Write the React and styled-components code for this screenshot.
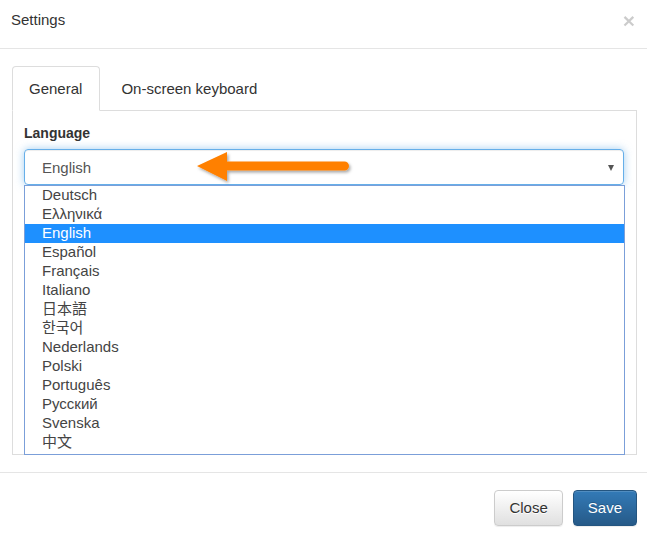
import React from "react";
import styled, { createGlobalStyle } from "styled-components";

const Global = createGlobalStyle`
  html, body { margin: 0; padding: 0; background: #fff; }
  body { font-family: "Liberation Sans", Arial, "Noto Sans CJK SC", sans-serif; color: #333; }
  * { box-sizing: border-box; }
`;

const Page = styled.div`
  width: 647px;
  height: 537px;
  background: #fff;
  display: flex;
  flex-direction: column;
`;

const Header = styled.div`
  height: 49px;
  border-bottom: 1px solid #e5e5e5;
  display: flex;
  justify-content: space-between;
  align-items: flex-start;
  padding: 10px 12px 0 11px;
`;

const Title = styled.div`
  font-size: 15px;
  line-height: 20px;
  color: #333;
`;

const CloseX = styled.div`
  font-size: 21px;
  font-weight: bold;
  line-height: 20px;
  color: #000;
  opacity: 0.2;
  margin-top: 1px;
`;

const Body = styled.div`
  padding: 17px 10px 17px 12px;
`;

const TabNav = styled.div`
  display: flex;
  height: 45px;
  border-bottom: 1px solid #ddd;
`;

const Tab = styled.div`
  height: 45px;
  padding: 12px 17px 11px 16px;
  margin-right: 2px;
  font-size: 15px;
  line-height: 20px;
  color: #333;
  border: 1px solid ${(p) => (p.$active ? "#ddd" : "transparent")};
  border-bottom: 1px solid ${(p) => (p.$active ? "#fff" : "transparent")};
  border-radius: 4px 4px 0 0;
  background: ${(p) => (p.$active ? "#fff" : "transparent")};
  ${(p) => !p.$active && "padding-left: 18px;"}
`;

const TabPanel = styled.div`
  height: 344px;
  border: 1px solid #ddd;
  border-top: none;
  padding: 12px 12px 0 11px;
`;

const Label = styled.div`
  font-size: 14px;
  font-weight: bold;
  line-height: 20px;
  color: #333;
  margin-bottom: 6px;
`;

const SelectWrap = styled.div`
  position: relative;
`;

const SelectBox = styled.div`
  height: 36px;
  border: 1px solid #66afe9;
  border-radius: 4px;
  box-shadow: inset 0 1px 1px rgba(0, 0, 0, 0.075), 0 0 8px rgba(102, 175, 233, 0.6);
  display: flex;
  align-items: center;
  justify-content: space-between;
  padding: 0 9px 0 17px;
  font-size: 15px;
  color: #555;
`;

const Caret = styled.span`
  width: 0;
  height: 0;
  border-left: 3.5px solid transparent;
  border-right: 3.5px solid transparent;
  border-top: 6px solid #555;
  margin-top: 1px;
`;

const ArrowSvg = styled.svg`
  position: absolute;
  left: 170px;
  top: 0;
  overflow: visible;
`;

const OptionList = styled.div`
  position: absolute;
  left: 0;
  top: 36px;
  width: calc(100% + 1px);
  border: 1px solid #7b9fd9;
  background: #fff;
  padding-bottom: 2px;
`;

const Option = styled.div`
  height: 19px;
  line-height: 18px;
  padding-left: 17px;
  font-size: 15px;
  white-space: nowrap;
  color: ${(p) => (p.$selected ? "#fff" : "#444")};
  background: ${(p) => (p.$selected ? "#1e90ff" : "transparent")};
`;

const Footer = styled.div`
  border-top: 1px solid #e5e5e5;
  padding: 17px 10px 11px 0;
  display: flex;
  justify-content: flex-end;
  gap: 10px;
`;

const Button = styled.button`
  height: 36px;
  padding: 0 14px;
  font-family: "Liberation Sans", Arial, sans-serif;
  font-size: 15px;
  line-height: 20px;
  border-radius: 4px;
  border: 1px solid ${(p) => (p.$primary ? "#245580" : "#ccc")};
  color: ${(p) => (p.$primary ? "#fff" : "#333")};
  background: ${(p) =>
    p.$primary
      ? "linear-gradient(to bottom, #337ab7 0%, #265a88 100%)"
      : "linear-gradient(to bottom, #fff 0%, #e0e0e0 100%)"};
  box-shadow: inset 0 1px 0 rgba(255, 255, 255, 0.15), 0 1px 1px rgba(0, 0, 0, 0.075);
  text-shadow: ${(p) => (p.$primary ? "0 -1px 0 rgba(0,0,0,.2)" : "0 1px 0 #fff")};
`;

const languages = [
  "Deutsch",
  "Ελληνικά",
  "English",
  "Español",
  "Français",
  "Italiano",
  "日本語",
  "한국어",
  "Nederlands",
  "Polski",
  "Português",
  "Русский",
  "Svenska",
  "中文",
];

export default function App() {
  return (
    <>
      <Global />
      <Page>
        <Header>
          <Title>Settings</Title>
          <CloseX>×</CloseX>
        </Header>
        <Body>
          <TabNav>
            <Tab $active>General</Tab>
            <Tab>On-screen keyboard</Tab>
          </TabNav>
          <TabPanel>
            <Label>Language</Label>
            <SelectWrap>
              <SelectBox>
                <span>English</span>
                <Caret />
              </SelectBox>
              <ArrowSvg width="160" height="36" viewBox="0 0 160 36">
                <defs>
                  <filter id="sh" x="-10%" y="-30%" width="120%" height="160%">
                    <feDropShadow dx="1.5" dy="2" stdDeviation="1.5" floodColor="#000" floodOpacity="0.35" />
                  </filter>
                </defs>
                <path
                  d="M3 17 L33 3 L33 12.5 L150.5 12.5 A4.5 4.5 0 0 1 150.5 21.5 L33 21.5 L33 32 Z"
                  fill="#ff8000"
                  filter="url(#sh)"
                />
              </ArrowSvg>
              <OptionList>
                {languages.map((l) => (
                  <Option key={l} $selected={l === "English"}>
                    {l}
                  </Option>
                ))}
              </OptionList>
            </SelectWrap>
          </TabPanel>
        </Body>
        <Footer>
          <Button>Close</Button>
          <Button $primary>Save</Button>
        </Footer>
      </Page>
    </>
  );
}
